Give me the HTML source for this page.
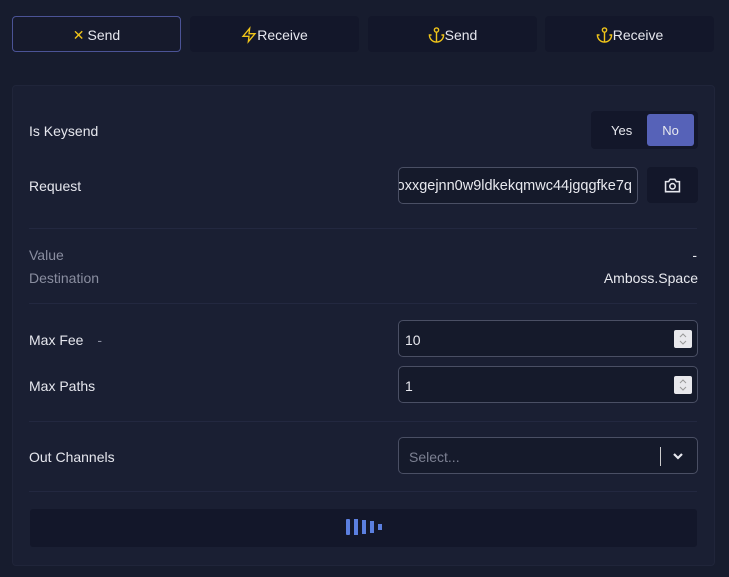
<!DOCTYPE html>
<html><head><style>
*{box-sizing:border-box;margin:0;padding:0}
body{width:729px;height:577px;background:#171c2e;font-family:"Liberation Sans",sans-serif;color:#e8e9ef;position:relative;overflow:hidden;font-size:14px}
.a{position:absolute}
.tab{position:absolute;top:16px;height:36px;width:169px;background:#13172a;border-radius:4px;display:flex;align-items:center;justify-content:center;font-size:14px;color:#e6e7ee;padding-top:2px}
.card{left:12px;top:85px;width:703px;height:481px;background:#1a1f33;border:1px solid #20253a;border-radius:4px}
.lbl{position:absolute;left:29px;font-size:14px;color:#e6e7ee}
.hr{position:absolute;left:29px;width:668px;height:1px;background:#232840}
.inp{position:absolute;left:398px;width:300px;height:37px;border:1px solid #4a4f64;border-radius:5px;background:#151a2b;font-size:14px;padding-left:6px;display:flex;align-items:center}
.spin{position:absolute;right:5px;top:9px;width:18px;height:18px;background:#e8e8ec;border-radius:2px}
</style></head><body>
<div class="tab" style="left:12px;border:1px solid #4b5396;background:#161a2c"><span style="color:#f0c419;margin-right:3px">✕</span>Send</div>
<div class="tab" style="left:190px"><svg width="16" height="18" viewBox="0 0 24 24" fill="none" stroke="#f0c419" stroke-width="2"><path d="M13 2L3 14h9l-1 8 10-12h-9l1-8z"/></svg>Receive</div>
<div class="tab" style="left:368px"><svg width="17" height="18" viewBox="0 0 24 24" fill="none" stroke="#f0c419" stroke-width="2"><circle cx="12" cy="5" r="3"/><path d="M12 22V8M5 12H2a10 10 0 0020 0h-3"/></svg>Send</div>
<div class="tab" style="left:545px"><svg width="17" height="18" viewBox="0 0 24 24" fill="none" stroke="#f0c419" stroke-width="2"><circle cx="12" cy="5" r="3"/><path d="M12 22V8M5 12H2a10 10 0 0020 0h-3"/></svg>Receive</div>
<div class="a card"></div>
<div class="lbl" style="top:123px">Is Keysend</div>
<div class="a" style="left:591px;top:111px;width:107px;height:38px;background:#13172a;border-radius:4px"></div>
<div class="a" style="left:611px;top:123px;font-size:13px">Yes</div>
<div class="a" style="left:647px;top:114px;width:47px;height:32px;background:#5662b8;border-radius:3px;display:flex;align-items:center;justify-content:center;font-size:13px">No</div>
<div class="lbl" style="top:178px">Request</div>
<div class="inp" style="top:167px;width:240px;overflow:hidden;white-space:nowrap;font-size:14.5px;padding-left:0;justify-content:flex-end;padding-right:5px">oxxgejnn0w9ldkekqmwc44jgqgfke7q</div>
<div class="a" style="left:647px;top:167px;width:51px;height:36px;background:#13172a;border-radius:4px;display:flex;align-items:center;justify-content:center"><svg width="19" height="17" viewBox="0 0 24 22" fill="none" stroke="#e6e7ee" stroke-width="2"><path d="M3 6h4l2-3h6l2 3h4v13H3z"/><circle cx="12" cy="12" r="3.5"/></svg></div>
<div class="hr" style="top:228px"></div>
<div class="lbl" style="top:247px;color:#8a8ea0">Value</div>
<div class="a" style="right:32px;top:247px">-</div>
<div class="lbl" style="top:270px;color:#8a8ea0">Destination</div>
<div class="a" style="right:31px;top:270px">Amboss.Space</div>
<div class="hr" style="top:303px"></div>
<div class="lbl" style="top:332px">Max Fee <span style="margin-left:10px;color:#8a8ea0">-</span></div>
<div class="inp" style="top:320px;padding-top:2px">10<div class="spin"><svg width="18" height="18" viewBox="0 0 18 18" fill="none" stroke="#999" stroke-width="1"><path d="M6 7l3-3 3 3M6 11l3 3 3-3"/></svg></div></div>
<div class="lbl" style="top:378px">Max Paths</div>
<div class="inp" style="top:366px;padding-top:2px">1<div class="spin"><svg width="18" height="18" viewBox="0 0 18 18" fill="none" stroke="#999" stroke-width="1"><path d="M6 7l3-3 3 3M6 11l3 3 3-3"/></svg></div></div>
<div class="hr" style="top:421px"></div>
<div class="lbl" style="top:449px">Out Channels</div>
<div class="inp" style="top:437px;padding-left:10px;padding-top:2px;color:#7c8092">Select...<div class="a" style="left:261px;top:9px;width:1px;height:19px;background:#ccc"></div><svg class="a" style="left:273px;top:12px" width="12" height="12" viewBox="0 0 12 12" fill="none" stroke="#e6e7ee" stroke-width="2.2"><path d="M2 4l4 4 4-4"/></svg></div>
<div class="hr" style="top:491px"></div>
<div class="a" style="left:30px;top:509px;width:667px;height:38px;background:#13172a;border-radius:3px"></div>
<div class="a" style="left:346px;top:519px;width:4px;height:16px;background:#5b7fe0;border-radius:1px"></div>
<div class="a" style="left:354px;top:519px;width:4px;height:16px;background:#5b7fe0"></div>
<div class="a" style="left:362px;top:520px;width:4px;height:14px;background:#5b7fe0"></div>
<div class="a" style="left:370px;top:521px;width:4px;height:12px;background:#5b7fe0"></div>
<div class="a" style="left:378px;top:524px;width:4px;height:6px;background:#5b7fe0"></div>
</body></html>
